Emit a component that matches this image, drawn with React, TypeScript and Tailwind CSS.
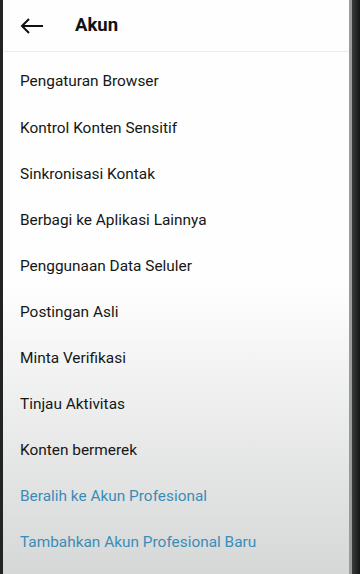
const items = [
  "Pengaturan Browser",
  "Kontrol Konten Sensitif",
  "Sinkronisasi Kontak",
  "Berbagi ke Aplikasi Lainnya",
  "Penggunaan Data Seluler",
  "Postingan Asli",
  "Minta Verifikasi",
  "Tinjau Aktivitas",
  "Konten bermerek",
];

const links = ["Beralih ke Akun Profesional", "Tambahkan Akun Profesional Baru"];

export default function App() {
  return (
    <div className="flex h-[574px] w-[360px] overflow-hidden bg-[#1e1f1f] font-['Roboto','Liberation_Sans',sans-serif]">
      <div className="w-[3px] bg-[#222423]" />
      <div className="flex flex-1 flex-col bg-gradient-to-b from-[#fdfefd] from-50% to-[#d6d8d7]">
        <header className="flex h-[52px] items-center border-b border-[#ececec] pl-[17px]">
          <svg width="24" height="16" viewBox="0 0 24 16" fill="none" stroke="#111" strokeWidth="2">
            <path d="M23 8H2" />
            <path d="M9 1L2 8l7 7" />
          </svg>
          <h1 className="ml-[31px] text-[18.5px] font-bold text-[#111]">Akun</h1>
        </header>
        <ul className="pt-[7px]">
          {items.map((t) => (
            <li key={t} className="flex h-[46.1px] items-center pl-[17px] text-[15.4px] text-[#161616]">
              {t}
            </li>
          ))}
          {links.map((t) => (
            <li key={t} className="flex h-[46.1px] items-center pl-[17px] text-[15.4px] text-[#3a8cb8]">
              {t}
            </li>
          ))}
        </ul>
      </div>
      <div className="w-[3px] bg-[#9a9c9b]" />
      <div className="w-[8px] bg-gradient-to-r from-[#3a3c3b] to-[#141515]" />
    </div>
  );
}
